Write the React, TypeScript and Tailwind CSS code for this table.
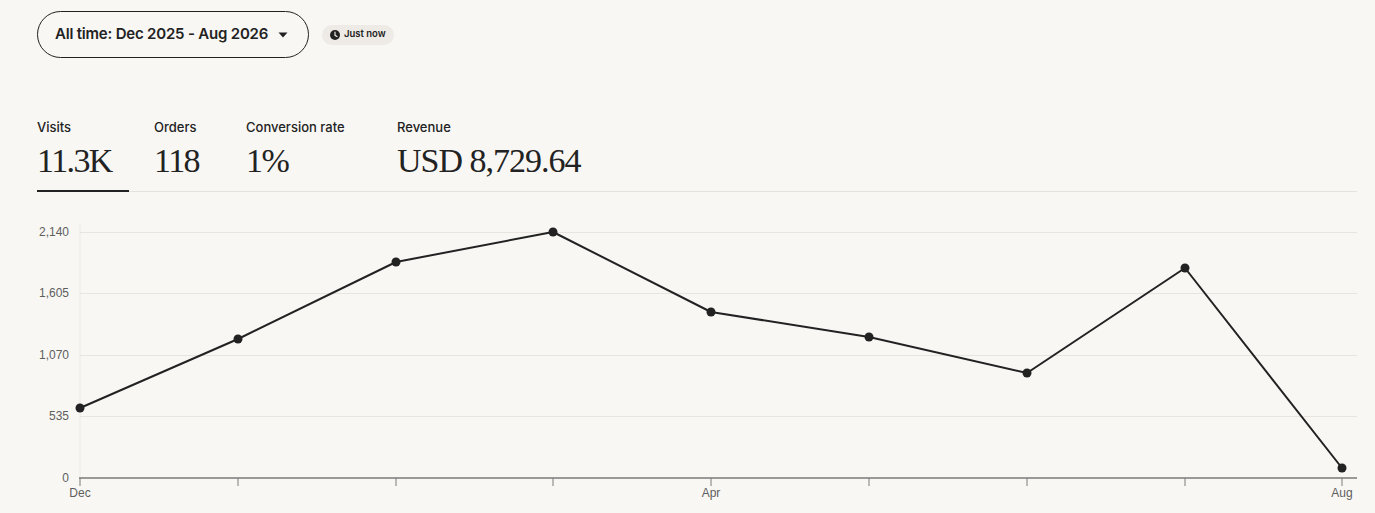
import React from "react";

const xs = [80, 238, 396, 553, 711, 869, 1027, 1185, 1342];
const ys = [408, 339, 262, 232, 312, 337, 373, 268, 468];
const grid = [
  { y: 232, l: "2,140" },
  { y: 293, l: "1,605" },
  { y: 355, l: "1,070" },
  { y: 416, l: "535" },
  { y: 478, l: "0" },
];

function Chart() {
  const pts = xs.map((x, i) => `${x},${ys[i]}`).join(" ");
  return (
    <svg width="1375" height="321" viewBox="0 192 1375 321" className="block">
      <line x1="80" y1="224" x2="80" y2="478" stroke="#ebe8e3" strokeWidth="1" />
      {grid.slice(0, 4).map((g) => (
        <line key={g.y} x1="80" y1={g.y + 0.5} x2="1357" y2={g.y + 0.5} stroke="#e8e5e0" strokeWidth="1" />
      ))}
      {grid.map((g) => (
        <text
          key={g.l}
          x="69"
          y={g.y + 4}
          textAnchor="end"
          fontFamily="'Liberation Sans', Arial, sans-serif"
          fontSize="12"
          fill="#5e5e5e"
        >
          {g.l}
        </text>
      ))}
      <line x1="79" y1="478" x2="1357" y2="478" stroke="#7a7a7a" strokeWidth="1.5" />
      {xs.map((x) => (
        <line key={x} x1={x} y1="478" x2={x} y2="486" stroke="#7a7a7a" strokeWidth="1" />
      ))}
      {[
        { x: 80, l: "Dec" },
        { x: 711, l: "Apr" },
        { x: 1342, l: "Aug" },
      ].map((t) => (
        <text
          key={t.l}
          x={t.x}
          y="497"
          textAnchor="middle"
          fontFamily="'Liberation Sans', Arial, sans-serif"
          fontSize="12"
          fill="#5e5e5e"
        >
          {t.l}
        </text>
      ))}
      <polyline points={pts} fill="none" stroke="#222222" strokeWidth="2" strokeLinejoin="round" />
      {xs.map((x, i) => (
        <circle key={x} cx={x} cy={ys[i]} r="4.5" fill="#222222" />
      ))}
    </svg>
  );
}

const tabs = [
  { label: "Visits", value: "11.3K", active: true, w: "w-[92px]", tr: "tracking-[-1.6px]" },
  { label: "Orders", value: "118", w: "w-[67px]", tr: "tracking-[-1.6px]" },
  { label: "Conversion rate", value: "1%", w: "w-[126px]", tr: "tracking-[-1.6px]" },
  { label: "Revenue", value: "USD 8,729.64", w: "", tr: "tracking-[-1px]" },
];

export default function App() {
  return (
    <div
      className="w-[1375px] h-[513px] overflow-hidden bg-[#f8f7f4] text-[#222222]"
      style={{ fontFamily: "Inter, 'Noto Sans', sans-serif" }}
    >
      <div className="flex items-center gap-[13px] pl-[37px] pt-[11px]">
        <button className="flex h-[47px] w-[272px] items-center rounded-full border border-[#222222] pl-[17px] pr-[20px] text-[15px] font-semibold tracking-[-0.2px] text-[#222222]">
          <span>All time: Dec 2025 - Aug 2026</span>
          <svg width="10" height="6" viewBox="0 0 10 6" className="ml-auto">
            <path d="M0.5 0.5h9L5 5.5z" fill="#222222" />
          </svg>
        </button>
        <div className="flex h-[20px] items-center gap-[4px] rounded-full bg-[#eeebe6] pl-[8px] pr-[8px] text-[9.5px] font-semibold text-[#222222]">
          <svg width="10" height="10" viewBox="0 0 10 10">
            <circle cx="5" cy="5" r="5" fill="#222222" />
            <path d="M5 2.2V5.3L7 6.5" stroke="#eeebe6" strokeWidth="1.2" fill="none" strokeLinecap="round" />
          </svg>
          <span>Just now</span>
        </div>
      </div>

      <div className="ml-[37px] mt-[61px] flex w-[1320px] gap-[25px] border-b border-[#e6e3de]">
        {tabs.map((t) => (
          <div key={t.label} className={`relative shrink-0 ${t.w}`}>
            <div className="text-[13px] font-medium leading-[16px] text-[#222222]">{t.label}</div>
            <div
              className={`mt-[10px] whitespace-nowrap pb-[14px] text-[34px] leading-[32px] text-[#222222] ${t.tr}`}
              style={{ fontFamily: "'Liberation Serif', 'Times New Roman', serif" }}
            >
              {t.value}
            </div>
            {t.active && <div className="absolute bottom-[-1px] left-0 right-0 h-[2px] bg-[#222222]" />}
          </div>
        ))}
      </div>

      <Chart />
    </div>
  );
}
